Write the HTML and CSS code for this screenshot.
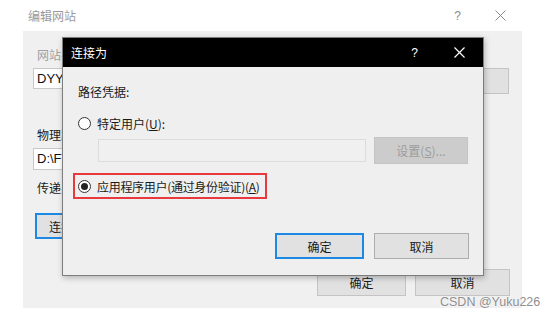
FILE: index.html
```html
<!DOCTYPE html>
<html lang="zh-CN">
<head>
  <meta charset="UTF-8">
  <title>连接为</title>
  <link rel="stylesheet" href="styles.css">
</head>
<body>

  <div class="window">
    <div class="win-title">
      <span class="win-caption">编辑网站</span>
      <span class="win-help">?</span>
      <svg class="win-close" width="11" height="11" viewBox="0 0 11 11">
        <path d="M0.5 0.5L10.5 10.5M10.5 0.5L0.5 10.5" stroke="#8a8a8a" stroke-width="1" fill="none"/>
      </svg>
    </div>

    <div class="win-body">
      <div class="field-label label-site">网站名(S):</div>
      <div class="field-row">
        <div class="text-input input-site">DYYSGL</div>
        <div class="btn btn-select"></div>
      </div>
      <div class="field-label label-path">物理路径(P):</div>
      <div class="text-input input-path">D:\FTP</div>
      <div class="field-label label-pass">传递身份验证</div>
      <div class="btn btn-connect">连接为(C)...</div>
      <div class="win-footer">
        <div class="btn btn-ok">确定</div>
        <div class="btn btn-cancel">取消</div>
      </div>
    </div>
  </div>

  <!-- modal "connect as" dialog over the site dialog -->
  <div class="dialog">
    <div class="dlg-title">
      <span class="dlg-caption">连接为</span>
      <span class="dlg-help">?</span>
      <svg class="dlg-close" width="11" height="11" viewBox="0 0 11 11">
        <path d="M0.5 0.5L10.5 10.5M10.5 0.5L0.5 10.5" stroke="#fff" stroke-width="1.2" fill="none"/>
      </svg>
    </div>

    <div class="dlg-body">
      <div class="dlg-heading">路径凭据:</div>

      <label class="radio-row row-user">
        <span class="radio"></span>
        <span>特定用户(<u>U</u>):</span>
      </label>

      <div class="user-row">
        <div class="user-input"></div>
        <div class="btn btn-set">设置(<u>S</u>)...</div>
      </div>

      <div class="highlight">
        <label class="radio-row">
          <span class="radio radio-on"></span>
          <span class="app-user">应用程序用户(通过身份验证)(<u>A</u>)</span>
        </label>
      </div>

      <div class="dlg-footer">
        <div class="btn btn-ok btn-default">确定</div>
        <div class="btn btn-cancel">取消</div>
      </div>
    </div>
  </div>

  <div class="watermark">CSDN @Yuku226</div>

</body>
</html>
```

FILE: styles.css
```css
html,
body {
  margin: 0;
  padding: 0
}

body {
  position: relative;
  width: 554px;
  height: 318px;
  overflow: hidden;
  background: #fff;
  font-family: "Noto Sans CJK SC", "Microsoft YaHei", sans-serif;
  font-size: 12px;
  color: #1a1a1a
}

.btn {
  box-sizing: border-box;
  display: flex;
  align-items: center;
  justify-content: center;
  background: #e1e1e1;
  border: 1px solid #c4c4c4;
  font-size: 12px;
  color: #1a1a1a;
  white-space: nowrap
}

/* outer dialog */

.win-title {
  display: flex;
  align-items: center;
  height: 31px;
  padding-left: 28px
}

.win-caption {
  color: #9a9a9a;
  font-size: 12px;
  flex-grow: 1
}

.win-help {
  color: #8a8a8a;
  font-family: "Liberation Sans", sans-serif;
  font-size: 12px;
  margin-right: 34px
}

.win-close {
  margin-right: 48px
}

.win-body {
  display: flex;
  flex-direction: column;
  margin-left: 23px;
  width: 499px;
  height: 277px;
  padding-left: 10px;
  background: #f0f0f0;
  box-sizing: border-box
}

.field-label {
  height: 16px;
  line-height: 16px;
  padding-left: 4px;
  white-space: nowrap
}

.label-site {
  margin-top: 16px;
  color: #a0a0a0
}

.field-row {
  display: flex;
  align-items: flex-start;
  margin-top: 5px;
  padding-right: 13px
}

.text-input {
  box-sizing: border-box;
  background: #fff;
  border: 1px solid #c8c8c8;
  padding-left: 3px;
  font-family: "Liberation Sans", sans-serif;
  font-size: 13px;
  color: #111
}

.input-site {
  flex-grow: 1;
  height: 21px;
  line-height: 19px
}

.btn-select {
  width: 80px;
  height: 26px;
  margin-left: 10px
}

.label-path {
  margin-top: 33px
}

.input-path {
  margin-top: 5px;
  height: 22px;
  line-height: 20px;
  width: 420px
}

.label-pass {
  margin-top: 10px
}

.btn.btn-connect {
  margin-top: 17px;
  margin-left: 2px;
  width: 90px;
  height: 26px;
  border: 2px solid #1e88e5
}

.win-footer {
  display: flex;
  justify-content: flex-end;
  gap: 9px;
  margin-top: 30px;
  padding-right: 12px
}

.win-footer .btn-ok {
  width: 89px;
  height: 27px
}

.win-footer .btn-cancel {
  width: 95px;
  height: 27px
}

/* connect-as dialog */

.dialog {
  position: absolute;
  left: 62px;
  top: 37px;
  width: 422px;
  height: 239px;
  box-sizing: border-box;
  border: 1px solid #7d7d7d;
  background: #efefef;
  box-shadow: 1px 2px 6px rgba(0, 0, 0, 0.25)
}

.dlg-title {
  display: flex;
  align-items: center;
  height: 29px;
  padding-left: 8px;
  background: #000;
  color: #fff
}

.dlg-caption {
  flex-grow: 1;
  font-size: 12px
}

.dlg-help {
  font-family: "Liberation Sans", sans-serif;
  font-size: 12px;
  margin-right: 36px
}

.dlg-close {
  margin-right: 18px
}

.dlg-body {
  padding-left: 15px;
  display: flex;
  flex-direction: column
}

.dlg-heading {
  margin-top: 17px;
  height: 16px;
  line-height: 16px
}

.radio-row {
  display: flex;
  align-items: center;
  height: 16px;
  gap: 6px;
  white-space: nowrap
}

.row-user {
  margin-top: 15px
}

.radio {
  box-sizing: border-box;
  flex-shrink: 0;
  width: 13px;
  height: 13px;
  border: 1px solid #333;
  border-radius: 50%;
  background: #fff;
  display: flex;
  align-items: center;
  justify-content: center
}

.radio-on::after {
  content: "";
  width: 7px;
  height: 7px;
  border-radius: 50%;
  background: #222
}

.app-user {
  letter-spacing: -0.3px
}

.user-row {
  display: flex;
  align-items: center;
  margin-top: 6px;
  margin-left: 20px
}

.user-input {
  box-sizing: border-box;
  width: 268px;
  height: 23px;
  border: 1px solid #dcdcdc;
  background: #f0f0f0
}

.btn.btn-set {
  width: 94px;
  height: 27px;
  margin-left: 8px;
  background: #cccccc;
  border-color: #c4c4c4;
  color: #9c9c9c
}

.highlight {
  box-sizing: border-box;
  width: 194px;
  height: 26px;
  margin-top: 9px;
  margin-left: -5px;
  padding-left: 3px;
  border: 2px solid #e8393f;
  display: flex;
  align-items: center
}

.dlg-footer {
  display: flex;
  gap: 10px;
  margin-top: 34px;
  margin-left: 197px
}

.dlg-footer .btn-ok {
  width: 89px;
  height: 26px
}

.dlg-footer .btn-cancel {
  width: 95px;
  height: 26px;
  border-color: #adadad
}

.btn.btn-default {
  border: 2px solid #1e88e5
}

.watermark {
  position: absolute;
  left: 440px;
  top: 295px;
  font-family: "Liberation Sans", Arial, sans-serif;
  font-size: 12.5px;
  color: #8f8f8f;
  text-shadow: 0 0 2px #fff
}
```
